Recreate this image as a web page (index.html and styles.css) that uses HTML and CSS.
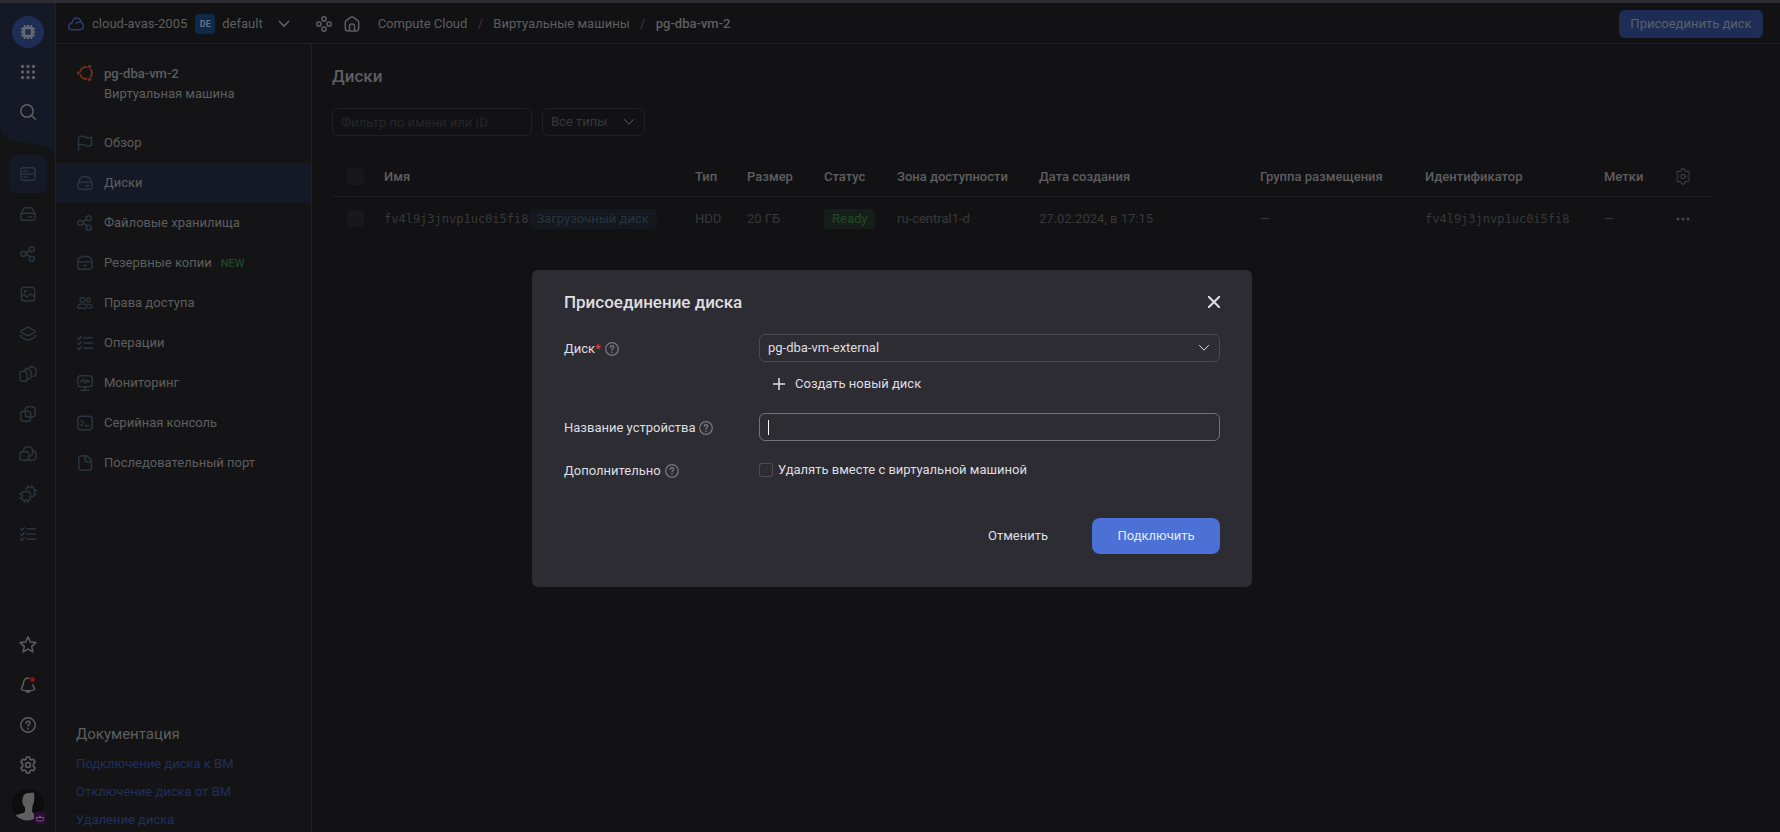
FILE: index.html
```html
<!DOCTYPE html>
<html lang="ru">
<head>
<meta charset="utf-8">
<title>Присоединение диска</title>
<link rel="stylesheet" href="styles.css">
</head>
<body>
<svg class="sprite" aria-hidden="true">
  <symbol id="server" viewBox="0 0 16 16"><rect x=".8" y="1.8" width="14.4" height="12.4" rx="2.8"/><path d="M1 8h14M3.5 5h3.5M3.5 11h3.5"/></symbol>
  <symbol id="drive" viewBox="0 0 16 16"><path d="M.8 9.5c0-1.300.5-2.200 1-3.300l1.200-2.600C3.500 2.500 4.500 1.800 5.600 1.800h4.800c1.100 0 2.100.7 2.600 1.800l1.200 2.600c.5 1.100 1 2 1 3.300v1.900a2.800 2.800 0 0 1-2.800 2.800H3.600a2.800 2.800 0 0 1-2.800-2.800zM1.300 8.300c.6-.8 1.400-1 2.300-1h8.800c.9 0 1.700.2 2.300 1M9 10.800h3"/></symbol>
  <symbol id="backup" viewBox="0 0 16 16"><path d="M.8 6.500C1.500 2.500 3.500 1.300 8 1.300s6.500 1.200 7.200 5.200v5a2.800 2.800 0 0 1-2.800 2.800H3.600a2.800 2.800 0 0 1-2.800-2.800zM1 7h14M6.500 10.500h3"/></symbol>
  <symbol id="nodes" viewBox="0 0 16 16"><circle cx="3.400" cy="8" r="2.500"/><circle cx="11.700" cy="3.300" r="2.500"/><circle cx="11.700" cy="12.700" r="2.500"/><path d="M5.600 6.800 9.500 4.500M5.900 8.600c1.600.2 2.800.7 3.900 2.300"/></symbol>
  <symbol id="picture" viewBox="0 0 16 16"><rect x="1.300" y="1.300" width="13.400" height="13.400" rx="2.800"/><circle cx="5.300" cy="5.300" r=".9"/><path d="m1.500 10.500 2.700-2L6.500 11l4.500-3 3.500 3"/></symbol>
  <symbol id="layers" viewBox="0 0 16 16"><path d="M2 4.300 6.800 1.600q1.200-.6 2.400 0L14 4.300q2.200 1.200 0 2.400L9.200 9.300q-1.200.6-2.400 0L2 6.700q-2.200-1.200 0-2.400zM.9 9.500c-.2.700.1 1.400.9 1.900l5 2.600q1.200.6 2.400 0l5-2.600c.8-.5 1.100-1.200.9-1.900"/></symbol>
  <symbol id="copies" viewBox="0 0 18 18"><rect x=".9" y="6.300" width="7" height="10" rx="2.200" transform="rotate(-4 4 11)"/><path d="M5.600 6C5.500 4.500 6 4 7.200 3.800l2.600.6c1.600.5 2.200 1.400 2.200 3v3.800c0 1.700-1 2.700-2.500 2.500l-1.500-.2M10 4C10 2.500 10.800 1.500 12.500 1.500l2 .6c1.700.5 2.500 1.500 2.500 3.200v3.500c0 1.700-1 2.700-2.600 2.500l-2-.4"/></symbol>
  <symbol id="overlap" viewBox="0 0 16 16"><rect x="5.300" y=".8" width="9.900" height="9.900" rx="2.800"/><rect x=".8" y="5.300" width="9.900" height="9.900" rx="2.800"/></symbol>
  <symbol id="clouds" viewBox="0 0 18 18"><rect x=".9" y="6.700" width="9" height="8.500" rx="2.800"/><path d="M4.500 6.300c0-2.600 1.500-4.500 4.500-4.500s4.500 2 4.500 4c2.500 0 3.700 1.800 3.700 4.500 0 3-1 4.900-3.700 4.900H7M13.500 6v2c0 1.800-1.200 3-3 3"/></symbol>
  <symbol id="chips" viewBox="0 0 18 18"><rect x="2.800" y="6.800" width="8.500" height="8.500" rx="2"/><path d="M6.800 5V4.600a2 2 0 0 1 2-2h4.600a2 2 0 0 1 2 2v4.800a2 2 0 0 1-2 2H13M9 .8v1.500M13 .8v1.500M15.500 5.500h2M15.500 9.500h2M.8 9h1.700M.8 13h1.700M5.500 15.500v1.700M9 15.500v1.700"/></symbol>
  <symbol id="tasks" viewBox="0 0 16 16"><path d="M7 2.800h8.300M7 8h8.300M7 13.200h8.300M.7 3l1.200 1.200L4.200 1.500M.7 8.200l1.200 1.200 2.300-2.700M.7 13.400l1.200 1.200 2.300-2.700"/></symbol>
  <symbol id="flag" viewBox="0 0 16 16"><path d="M1.500 15.300V2.500C4 .8 6 1 8 2s4.200 1 6.500.2v8C12 11.500 10 11.300 8 10.300s-4-1-6.500.3"/></symbol>
  <symbol id="users" viewBox="0 0 18 16"><circle cx="6" cy="4.300" r="2.600"/><circle cx="12.800" cy="4.500" r="2.100"/><path d="M.9 11.800c0-2 2.300-2.900 5.100-2.900s5.100.9 5.100 2.900c0 1.400-1 2.100-2.200 2.100H3.100c-1.200 0-2.200-.7-2.200-2.100zM12 9.200c3 0 5.100.8 5.100 2.600 0 1.100-.8 1.700-1.900 1.700h-2.500"/></symbol>
  <symbol id="monitor" viewBox="0 0 16 16"><rect x=".8" y=".8" width="14.400" height="10.900" rx="2.800"/><path d="M3.500 6.500h1.300l1.400-2.300L8.500 8l2-3 1 1.500h1M8 12v3M4 15.200h8"/></symbol>
  <symbol id="console" viewBox="0 0 16 16"><rect x=".8" y="1.300" width="14.400" height="13.400" rx="2.800"/><path d="m4 5.500 2.500 2.500L4 10.500M8.500 10.700h3.300"/></symbol>
  <symbol id="file" viewBox="0 0 16 16"><path d="M4.500.8h4.300c.8 0 1.500.3 2.100.9l2.700 2.700c.6.600.9 1.300.9 2.100v5.900a2.800 2.800 0 0 1-2.800 2.800H4.500a2.800 2.800 0 0 1-2.800-2.800V3.600A2.800 2.800 0 0 1 4.500.8zM8 1v3.500A2.500 2.500 0 0 0 10.500 7h3.700"/></symbol>
  <symbol id="search" viewBox="0 0 16 16"><circle cx="7" cy="7" r="6.200"/><path d="m11.500 11.500 3.800 3.800"/></symbol>
  <symbol id="star" viewBox="0 0 18 18"><path d="m9 .9 2.300 5.100 5.600.6-4.200 3.800 1.200 5.500L9 13.100l-4.900 2.800 1.200-5.500-4.200-3.800 5.600-.6z"/></symbol>
  <symbol id="bell" viewBox="0 0 16 16"><path d="M9 1.200C6 .7 4 2.500 3.600 5.200L3.300 7.500c-.2 1.400-1.900 2.600-1.900 4.500 0 1.200 2.900 1.700 6.600 1.700s6.600-.5 6.600-1.700c0-1.600-1.500-2.700-1.800-4M6.300 14.700q1.700 1 3.400 0"/></symbol>
  <symbol id="help" viewBox="0 0 16 16"><circle cx="8" cy="8" r="7.200"/><path d="M6 6.200C6.100 5 6.900 4.300 8 4.300s2 .7 2 1.800c0 1.400-2 1.500-2 3M8 11.200v.7"/></symbol>
  <symbol id="gear" viewBox="0 0 16 17"><circle cx="8" cy="8.500" r="2.300"/><path d="M6.600.9h2.800l.5 2.100 1.200.7 2.100-.6 1.500 2.600-1.600 1.500v2.600l1.600 1.500-1.500 2.600-2.100-.6-1.200.7-.5 2.100H6.600L6.100 14l-1.200-.7-2.100.6-1.500-2.600 1.600-1.500V7.200L1.300 5.700l1.500-2.600 2.100.6L6.100 3z"/></symbol>
  <symbol id="cloud" viewBox="0 0 16 14"><path d="M4 12.700c-2 0-3.300-1.200-3.300-3S2 6.500 4 6.300C4.300 3 6.200 1.200 8.800 1.200c2.400 0 4 1.500 4.200 4 1.500.6 2.300 1.900 2.300 3.600 0 2.400-1.500 3.900-3.800 3.900zM8 6.500c.6-1.200 2.500-1.700 4.600-1.200"/></symbol>
  <symbol id="chevron" viewBox="0 0 12 12"><path d="m1.500 3.500 4.500 4.700 4.500-4.700"/></symbol>
  <symbol id="rings" viewBox="0 0 16 16"><circle cx="8" cy="2.900" r="2.100"/><circle cx="8" cy="13.100" r="2.100"/><circle cx="2.900" cy="8" r="2.100"/><circle cx="13.100" cy="8" r="2.100"/></symbol>
  <symbol id="home" viewBox="0 0 16 16"><path d="M1.300 6.700c0-.8.300-1.500.9-2L6.500 1.300q1.500-1 3 0l4.300 3.400c.6.500.9 1.200.9 2v5.700a2.500 2.500 0 0 1-2.500 2.500H3.800a2.500 2.500 0 0 1-2.500-2.500zM5.500 14.700V10q0-2 2.500-2t2.500 2v4.700"/></symbol>
  <symbol id="plus" viewBox="0 0 12 12"><path d="M6 0v12M0 6h12"/></symbol>
  <symbol id="close" viewBox="0 0 12 12"><path d="m.7.7 10.600 10.600M11.300.7.7 11.300"/></symbol>
</svg>

<div class="app">
  <nav class="rail" aria-label="Сервисы">
    <svg class="rail-wave" viewBox="0 0 55 150" preserveAspectRatio="none" aria-hidden="true"><path d="M0 0H55V150C51 145 45 143 38 142L16 138C8 137 0 131 0 121Z"/></svg>
    <a class="rail-item" href="#" aria-label="Compute Cloud"><span class="rail-logo"><svg viewBox="0 0 16 16"><path fill-rule="evenodd" d="M4 1h1.500v1.500h1.200V1h2.600v1.500h1.200V1H12v1.500q1.500 0 1.500 1.500H15v1.500h-1.500v1.200H15v2.600h-1.500v1.200H15V12h-1.500q0 1.500-1.500 1.500V15h-1.500v-1.500H9.300V15H6.700v-1.500H5.500V15H4v-1.500q-1.500 0-1.500-1.500H1v-1.500h1.500V9.300H1V6.700h1.500V5.500H1V4h1.500Q2.500 2.500 4 2.500zM5.300 5.300v5.400h5.400V5.300z"/></svg></span></a>
    <button class="rail-item light" aria-label="Все сервисы"><svg class="dots" viewBox="0 0 16 16"><circle cx="2.500" cy="2.500" r="1.700"/><circle cx="8" cy="2.500" r="1.700"/><circle cx="13.500" cy="2.500" r="1.700"/><circle cx="2.500" cy="8" r="1.700"/><circle cx="8" cy="8" r="1.700"/><circle cx="13.500" cy="8" r="1.700"/><circle cx="2.500" cy="13.500" r="1.700"/><circle cx="8" cy="13.500" r="1.700"/><circle cx="13.500" cy="13.500" r="1.700"/></svg></button>
    <button class="rail-item light" aria-label="Поиск"><svg class="icon"><use href="#search"/></svg></button>
    <div class="rail-services">
      <a class="rail-item active" href="#" aria-label="Виртуальные машины"><svg class="icon"><use href="#server"/></svg></a>
      <a class="rail-item" href="#" aria-label="Диски"><svg class="icon"><use href="#drive"/></svg></a>
      <a class="rail-item" href="#" aria-label="Файловые хранилища"><svg class="icon"><use href="#nodes"/></svg></a>
      <a class="rail-item" href="#" aria-label="Образы"><svg class="icon"><use href="#picture"/></svg></a>
      <a class="rail-item" href="#" aria-label="Снимки"><svg class="icon"><use href="#layers"/></svg></a>
      <a class="rail-item" href="#" aria-label="Группы виртуальных машин"><svg class="icon wide"><use href="#copies"/></svg></a>
      <a class="rail-item" href="#" aria-label="Группы размещения"><svg class="icon"><use href="#overlap"/></svg></a>
      <a class="rail-item" href="#" aria-label="Пулы резервов"><svg class="icon wide"><use href="#clouds"/></svg></a>
      <a class="rail-item" href="#" aria-label="GPU-кластеры"><svg class="icon wide"><use href="#chips"/></svg></a>
      <a class="rail-item" href="#" aria-label="Операции"><svg class="icon"><use href="#tasks"/></svg></a>
    </div>
    <button class="rail-item light" aria-label="Избранное"><svg class="icon wide"><use href="#star"/></svg></button>
    <button class="rail-item light" aria-label="Уведомления"><svg class="icon"><use href="#bell"/></svg><span class="rail-dot"></span></button>
    <button class="rail-item light" aria-label="Помощь"><svg class="icon"><use href="#help"/></svg></button>
    <button class="rail-item light" aria-label="Настройки"><svg class="icon wide"><use href="#gear"/></svg></button>
    <button class="rail-item" aria-label="Профиль"><span class="avatar"><svg viewBox="0 0 32 32"><path d="M11 8c.5-2.500 3-4 6-4l5-.5c.7 5.500.3 10-1.500 13.500l-.5 5c.5 2.500 3 3.500 7 4.500-6 6.500-17 6.500-24 .5 1-2 7-2 10-4v-4.500c-1.700-2-2.700-4-2.700-7z"/></svg></span><span class="avatar-badge"><svg viewBox="0 0 8 8"><path d="M.5 3.500h7v2q0 1.500-1.500 1.500H2Q.5 7 .5 5.500zM2.500 3.300Q4 0 5.500 3.300"/></svg></span></button>
  </nav>

  <div class="workspace">
    <header class="topbar">
      <a class="cloud-link" href="#"><svg class="cloud-icon"><use href="#cloud"/></svg>cloud-avas-2005</a>
      <button class="folder"><span class="folder-badge">DE</span>default<svg class="chevron bold"><use href="#chevron"/></svg></button>
      <button class="tool" aria-label="Ресурсы"><svg class="icon"><use href="#rings"/></svg></button>
      <a class="tool" href="#" aria-label="Главная"><svg class="icon"><use href="#home"/></svg></a>
      <nav class="crumbs" aria-label="Путь"><a href="#">Compute Cloud</a><i>/</i><a href="#">Виртуальные машины</a><i>/</i><a class="current" href="#">pg-dba-vm-2</a></nav>
      <button class="attach">Присоединить диск</button>
    </header>

    <div class="columns">
      <aside class="sidebar">
        <div class="resource">
          <svg class="ubuntu" viewBox="0 0 18 18"><circle cx="10" cy="9" r="6"/><circle class="gap" cx="2.200" cy="9" r="2.500"/><circle class="gap" cx="13.700" cy="2.400" r="2.500"/><circle class="gap" cx="13.700" cy="15.600" r="2.500"/><circle class="dot" cx="2.300" cy="9" r="1.700"/><circle class="dot" cx="13.700" cy="2.500" r="1.700"/><circle class="dot" cx="13.700" cy="15.500" r="1.700"/></svg>
          <div><strong>pg-dba-vm-2</strong><span>Виртуальная машина</span></div>
        </div>
        <nav class="menu" aria-label="Разделы">
          <a href="#"><svg class="icon"><use href="#flag"/></svg>Обзор</a>
          <a class="selected" href="#"><svg class="icon"><use href="#drive"/></svg>Диски</a>
          <a href="#"><svg class="icon"><use href="#nodes"/></svg>Файловые хранилища</a>
          <a href="#"><svg class="icon"><use href="#backup"/></svg><span>Резервные копии<span class="new">NEW</span></span></a>
          <a href="#"><svg class="icon"><use href="#users"/></svg>Права доступа</a>
          <a href="#"><svg class="icon"><use href="#tasks"/></svg>Операции</a>
          <a href="#"><svg class="icon"><use href="#monitor"/></svg>Мониторинг</a>
          <a href="#"><svg class="icon"><use href="#console"/></svg>Серийная консоль</a>
          <a href="#"><svg class="icon"><use href="#file"/></svg>Последовательный порт</a>
        </nav>
        <section class="docs">
          <h2>Документация</h2>
          <a href="#">Подключение диска к ВМ</a>
          <a href="#">Отключение диска от ВМ</a>
          <a href="#">Удаление диска</a>
        </section>
      </aside>

      <main class="content">
        <h1>Диски</h1>
        <div class="filters">
          <input class="filter" type="text" placeholder="Фильтр по имени или ID" aria-label="Фильтр по имени или ID">
          <div class="pick types"><select aria-label="Тип"><option>Все типы</option></select><svg class="chevron"><use href="#chevron"/></svg></div>
        </div>
        <table class="disks">
          <colgroup><col class="c-check"><col><col class="c-type"><col class="c-size"><col class="c-status"><col class="c-zone"><col class="c-date"><col class="c-group"><col class="c-id"><col class="c-tags"><col class="c-menu"></colgroup>
          <thead><tr><th class="check"><input type="checkbox" aria-label="Выбрать все"></th><th>Имя</th><th>Тип</th><th>Размер</th><th>Статус</th><th>Зона доступности</th><th>Дата создания</th><th>Группа размещения</th><th>Идентификатор</th><th>Метки</th><th><button class="cell-button" aria-label="Настроить таблицу"><svg class="table-gear"><use href="#gear"/></svg></button></th></tr></thead>
          <tbody><tr><td class="check"><input type="checkbox" aria-label="Выбрать диск"></td><td><div class="name"><code>fv4l9j3jnvp1uc0i5fi8</code><span class="tag">Загрузочный диск</span></div></td><td>HDD</td><td>20 ГБ</td><td class="status"><span class="tag ready">Ready</span></td><td>ru-central1-d</td><td>27.02.2024, в 17:15</td><td>—</td><td><code>fv4l9j3jnvp1uc0i5fi8</code></td><td>—</td><td><button class="cell-button" aria-label="Действия"><svg class="more" viewBox="0 0 14 4"><circle cx="2" cy="2" r="1.500"/><circle cx="7" cy="2" r="1.500"/><circle cx="12" cy="2" r="1.500"/></svg></button></td></tr></tbody>
        </table>
      </main>
    </div>
  </div>
</div>

<div class="overlay">
  <form class="modal" role="dialog" aria-labelledby="modal-title">
    <div class="modal-head"><h2 id="modal-title">Присоединение диска</h2><button class="close" type="button" aria-label="Закрыть"><svg><use href="#close"/></svg></button></div>
    <div class="field">
      <label for="disk">Диск<span class="required">*</span><svg class="hint"><use href="#help"/></svg></label>
      <div class="control">
        <div class="pick"><select id="disk"><option>pg-dba-vm-external</option></select><svg class="chevron"><use href="#chevron"/></svg></div>
        <button class="create" type="button"><svg><use href="#plus"/></svg>Создать новый диск</button>
      </div>
    </div>
    <div class="field">
      <label for="device">Название устройства<svg class="hint"><use href="#help"/></svg></label>
      <div class="control"><input class="device" id="device" type="text"></div>
    </div>
    <div class="field extra">
      <span class="label">Дополнительно<svg class="hint"><use href="#help"/></svg></span>
      <label class="auto-delete" for="auto-delete"><input id="auto-delete" type="checkbox">Удалять вместе с виртуальной машиной</label>
    </div>
    <div class="actions"><button class="cancel" type="button">Отменить</button><button class="submit" type="submit">Подключить</button></div>
  </form>
</div>
</body>
</html>
```
FILE: styles.css
```css
* { box-sizing: border-box; }

body {
  margin: 0;
  background: #121214;
  color: #5e5e5f;
  font: 13px/20px Roboto, "Noto Sans", sans-serif;
}

a { color: inherit; text-decoration: none; }

button, input, select {
  margin: 0;
  padding: 0;
  border: 0;
  background: none;
  color: inherit;
  font: inherit;
}

h1, h2 { margin: 0; font-weight: 500; }
code { font: 12px/20px "DejaVu Sans Mono", monospace; }
svg { flex: none; fill: none; stroke: currentColor; stroke-width: 1.5; stroke-linecap: round; stroke-linejoin: round; }
.sprite { position: absolute; width: 0; height: 0; }
.icon { width: 16px; height: 16px; }
.wide { width: 18px; height: 18px; }
.chevron { width: 12px; height: 12px; stroke-width: 1; }
.chevron.bold { stroke-width: 1.7; }

.app {
  display: flex;
  height: 100vh;
  border-top: 3px solid #2d2c33;
  overflow: hidden;
}

/* Service rail */
.rail {
  position: relative;
  display: flex;
  flex-direction: column;
  align-items: center;
  width: 56px;
  padding: 9px 0 7px;
  border-right: 1px solid #202022;
  background: #141416;
}
.rail-wave {
  position: absolute;
  top: 0;
  left: 0;
  width: 55px;
  height: 150px;
  fill: #151926;
  stroke: none;
}
.rail-item {
  position: relative;
  display: flex;
  flex: none;
  align-items: center;
  justify-content: center;
  width: 38px;
  height: 40px;
  color: #2a353f;
}
.rail-item.light { color: #5f5f60; }
.rail-item.active { height: 38px; margin: 1px 0; border-radius: 8px; background: #151926; }
.rail-services { flex: 1; padding-top: 22px; }
.rail-logo {
  display: flex;
  align-items: center;
  justify-content: center;
  width: 32px;
  height: 32px;
  border-radius: 50%;
  background: #1e2d56;
}
.rail-logo svg { width: 16px; height: 16px; fill: #66686e; stroke: none; }
.dots { width: 16px; height: 16px; fill: currentColor; stroke: none; }
.rail-dot {
  position: absolute;
  top: 12px;
  right: 12px;
  width: 5px;
  height: 5px;
  border-radius: 50%;
  background: #7d1717;
}
.avatar { width: 32px; height: 32px; border-radius: 50%; background: #0d0d0e; overflow: hidden; }
.avatar svg { display: block; width: 32px; height: 32px; fill: #5f5f60; stroke: none; }
.avatar-badge {
  position: absolute;
  right: 1px;
  bottom: 1px;
  display: flex;
  align-items: center;
  justify-content: center;
  width: 12px;
  height: 12px;
  border-radius: 3px;
  background: #2e0d34;
}
.avatar-badge svg { width: 8px; height: 8px; stroke: #775080; stroke-width: 1; }

/* Top bar */
.workspace { display: flex; flex: 1; flex-direction: column; min-width: 0; }
.topbar {
  display: flex;
  align-items: center;
  height: 41px;
  padding: 2px 17px 0 12px;
  border-bottom: 1px solid #202022;
}
.cloud-link, .folder { display: flex; align-items: center; gap: 8px; }
.cloud-icon { width: 16px; height: 14px; color: #2b3c6c; }
.folder { gap: 7px; margin-left: 8px; }
.folder .chevron { margin-left: 8px; }
.folder-badge {
  width: 20px;
  border-radius: 4px;
  background: #0d2a4a;
  color: #68727f;
  font-size: 9px;
  font-weight: 700;
}
.tool { display: flex; margin-left: 12px; }
.folder + .tool { margin-left: 26px; }
.crumbs { display: flex; flex: 1; margin-left: 18px; }
.crumbs i { width: 26px; color: #3c3c3e; font-style: normal; text-align: center; }
.current, .resource strong { font-weight: 500; }
.attach {
  width: 144px;
  height: 28px;
  border-radius: 6px;
  background: #1e2d56;
  color: #5c6066;
}

/* Sidebar */
.columns { display: flex; flex: 1; min-height: 0; }
.sidebar {
  display: flex;
  flex: none;
  flex-direction: column;
  width: 256px;
  border-right: 1px solid #202022;
  background: #141416;
}
.resource { display: flex; gap: 10px; padding: 20px 20px 0; }
.resource strong, .resource span { display: block; }
.ubuntu { width: 18px; height: 18px; stroke: #6b3116; stroke-width: 2; }
.ubuntu .gap { fill: #141416; stroke: none; }
.ubuntu .dot { fill: #6b3116; stroke: none; }
.menu { flex: 1; padding-top: 19px; }
.menu a { display: flex; align-items: center; gap: 11px; height: 40px; padding-left: 21px; }
.menu .icon { color: #2a353f; }
.menu .selected { background: #151926; }
.new { margin-left: 9px; color: #224426; font-size: 11px; font-weight: 500; }
.docs { display: flex; flex-direction: column; gap: 8px; padding: 0 20px 2px; color: #1f2f60; }
.docs h2 { color: #5e5e5f; font-size: 15px; font-weight: 400; margin-bottom: 2px; }

/* Disk list */
.content { flex: 1; min-width: 0; padding: 20px 68px 0 20px; }
.content h1 { font-size: 17px; line-height: 24px; }
.filters { display: flex; gap: 10px; margin-top: 20px; }
.filter {
  width: 200px;
  height: 28px;
  padding: 0 8px;
  border: 1px solid #212123;
  border-radius: 6px;
}
.filter::placeholder { color: #262628; opacity: 1; }
.pick { position: relative; }
.pick select {
  appearance: none;
  display: block;
  width: 100%;
  height: 28px;
  padding: 0 8px;
  border: 1px solid #48474d;
  border-radius: 6px;
}
.pick .chevron { position: absolute; top: 8px; right: 10px; pointer-events: none; }
.types { width: 103px; }
.types select { border-color: #212123; color: #38383a; }

.disks { width: 100%; margin-top: 20px; border-collapse: collapse; table-layout: fixed; }
.disks th, .disks td { height: 40px; padding: 2px 0 0; color: #38383a; text-align: left; white-space: nowrap; }
.disks td { height: 43px; }
.disks th { border-bottom: 1px solid #1e1e20; color: #5e5e5f; font-weight: 500; }
.disks .check { padding-left: 15px; }
.check input { appearance: none; display: block; width: 17px; height: 17px; border-radius: 4px; background: #18181a; }
.c-check { width: 52px; }
.c-type { width: 52px; }
.c-size { width: 77px; }
.c-status { width: 73px; }
.c-zone { width: 142px; }
.c-date { width: 221px; }
.c-group { width: 165px; }
.c-id { width: 179px; }
.c-tags { width: 67px; }
.c-menu { width: 41px; }
.name { display: flex; }
.tag { display: inline-block; padding: 0 8px; border-radius: 4px; background: #14181e; color: #28343f; }
.tag.ready { background: #151e18; color: #224a28; }
.cell-button { display: flex; justify-content: center; width: 24px; color: #47474a; }
.table-gear { width: 16px; height: 17px; stroke-width: 1; }
.more { width: 14px; height: 4px; fill: currentColor; stroke: none; }

/* Dialog */
.overlay { position: fixed; inset: 0; display: flex; align-items: center; justify-content: center; padding: 25px 0 0 4px; }
.modal {
  width: 720px;
  padding: 20px 32px 33px;
  border-radius: 6px;
  background: #2d2c33;
  color: #dedee0;
}
.modal-head { display: flex; align-items: center; justify-content: space-between; height: 24px; margin-bottom: 20px; }
.modal-head h2 { font-size: 17px; }
.close { display: flex; color: #dedee0; }
.close svg { width: 12px; height: 12px; stroke-width: 2; }
.field { display: grid; grid-template-columns: 195px 1fr; margin-bottom: 15px; }
.field > label, .label { display: flex; align-items: center; height: 28px; padding-top: 1px; }
.required { color: #e0474a; }
.hint { width: 14px; height: 14px; margin-left: 4px; color: #77767b; }
.create { display: flex; align-items: center; gap: 10px; height: 28px; margin: 8px 0 0 14px; }
.create svg { width: 12px; height: 12px; stroke-linecap: butt; }
.device {
  display: block;
  width: 100%;
  height: 28px;
  padding: 0 8px;
  border: 1px solid #737277;
  border-radius: 6px;
  background: linear-gradient(#fff, #fff) 8px 50% / 1px 15px no-repeat;
  outline: 0;
}
.field > .auto-delete { gap: 5px; height: 26px; }
.auto-delete input { appearance: none; width: 14px; height: 14px; border: 1px solid #4e4d53; border-radius: 3px; }
.extra { margin-bottom: 34px; }
.actions { display: flex; align-items: center; justify-content: flex-end; gap: 44px; }
.submit { width: 128px; height: 36px; border-radius: 8px; background: #4b71d6; color: #e4e9f8; }
```
